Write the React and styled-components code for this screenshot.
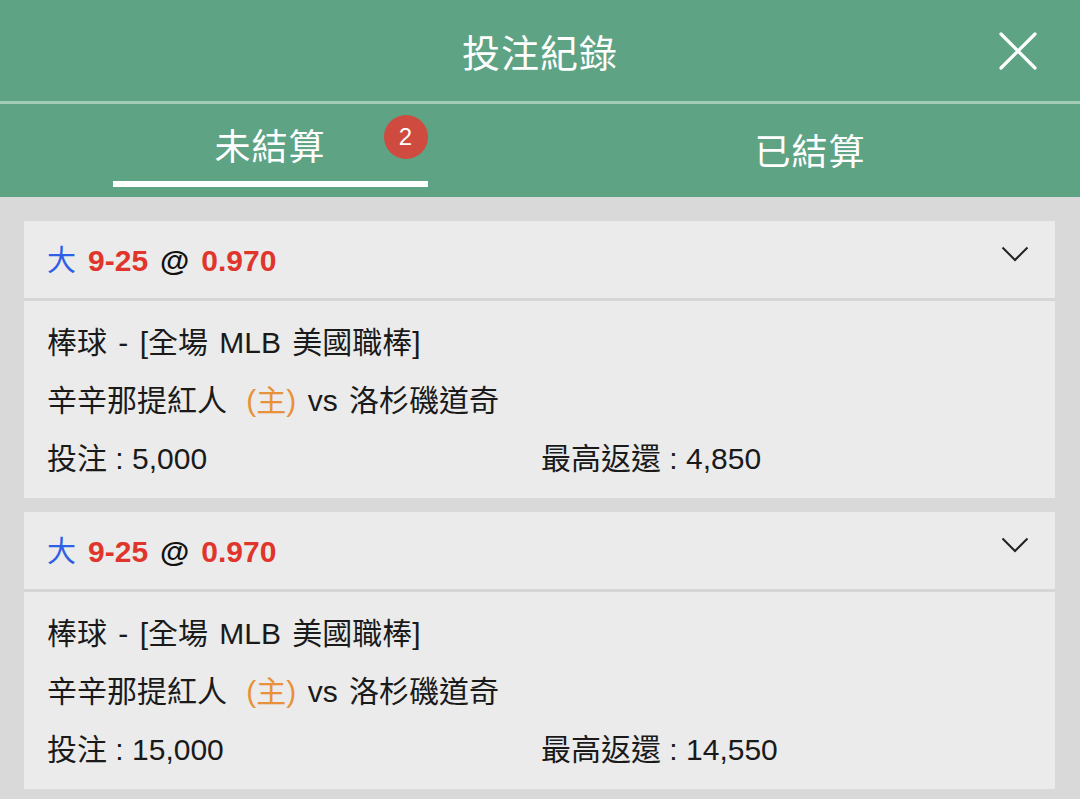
import styled, { createGlobalStyle } from "styled-components";

const GlobalStyle = createGlobalStyle`
  html, body {
    margin: 0;
    padding: 0;
    background: #d9d9d9;
  }
  body {
    font-family: "Liberation Sans", Arial, "Noto Sans CJK TC", sans-serif;
  }
`;

const Page = styled.div`
  width: 1080px;
  min-height: 799px;
  background: #d9d9d9;
`;

const Header = styled.header`
  background: #5ea384;
  color: #ffffff;
`;

const TitleBar = styled.div`
  height: 101px;
  display: flex;
  align-items: center;
  justify-content: center;
  position: relative;
  border-bottom: 3px solid #a3ccb8;
`;

const Title = styled.h1`
  margin: 0;
  font-size: 38px;
  font-weight: 400;
  letter-spacing: 1px;
`;

const CloseButton = styled.button`
  position: absolute;
  right: 42px;
  top: 31px;
  width: 40px;
  height: 40px;
  padding: 0;
  border: none;
  background: none;
  cursor: pointer;
`;

const Tabs = styled.nav`
  height: 93px;
  display: grid;
  grid-template-columns: 540px 540px;
`;

const Tab = styled.div`
  display: flex;
  justify-content: center;
`;

const TabInner = styled.div`
  position: relative;
  width: 315px;
  display: flex;
  justify-content: center;
  padding-top: ${({ $top }) => $top}px;
  box-sizing: border-box;
  border-bottom: 6px solid ${({ $active }) => ($active ? "#ffffff" : "transparent")};
  height: 83px;
`;

const TabLabel = styled.span`
  font-size: 36px;
  line-height: 44px;
  letter-spacing: 1px;
`;

const Badge = styled.span`
  position: absolute;
  right: 0;
  top: 11px;
  width: 44px;
  height: 44px;
  border-radius: 50%;
  background: #cf4a3f;
  color: #ffffff;
  font-size: 24px;
  display: flex;
  align-items: center;
  justify-content: center;
`;

const List = styled.main`
  padding: 24px 24px 0 24px;
  display: flex;
  flex-direction: column;
  gap: 14px;
`;

const Card = styled.section`
  background: #ebebeb;
  width: 1031px;
`;

const CardHead = styled.div`
  height: 77px;
  display: flex;
  align-items: center;
  justify-content: space-between;
  padding: 0 26px 0 23px;
  border-bottom: 3px solid #d6d6d6;
`;

const Pick = styled.div`
  font-size: 30px;
  font-weight: 700;
  display: flex;
  align-items: baseline;
  gap: 12px;
  margin-top: -4px;
`;

const Side = styled.span`
  color: #2f5fe6;
  font-weight: 400;
  font-size: 29px;
`;

const Red = styled.span`
  color: #e0352b;
`;

const At = styled.span`
  color: #111111;
`;

const Chevron = styled.svg`
  width: 28px;
  height: 16px;
  margin-top: -12px;
`;

const CardBody = styled.div`
  padding: 13px 23px 10px;
  display: flex;
  flex-direction: column;
  font-size: 30px;
  color: #1a1a1a;
`;

const Line = styled.div`
  height: 58px;
  line-height: 58px;
  word-spacing: 3px;
`;

const Home = styled.span`
  color: #e8913a;
  margin-left: 8px;
`;

const Amounts = styled.div`
  display: grid;
  grid-template-columns: 494px auto;
  height: 58px;
  line-height: 58px;
`;

const bets = [
  { stake: "5,000", max: "4,850" },
  { stake: "15,000", max: "14,550" },
];

export default function App() {
  return (
    <Page>
      <GlobalStyle />
      <Header>
        <TitleBar>
          <Title>投注紀錄</Title>
          <CloseButton aria-label="close">
            <svg width="40" height="40" viewBox="0 0 40 40">
              <path d="M3 3 L37 37 M37 3 L3 37" stroke="#fff" strokeWidth="3.2" strokeLinecap="round" />
            </svg>
          </CloseButton>
        </TitleBar>
        <Tabs>
          <Tab>
            <TabInner $active $top={22}>
              <TabLabel>未結算</TabLabel>
              <Badge>2</Badge>
            </TabInner>
          </Tab>
          <Tab>
            <TabInner $top={27}>
              <TabLabel>已結算</TabLabel>
            </TabInner>
          </Tab>
        </Tabs>
      </Header>
      <List>
        {bets.map((b, i) => (
          <Card key={i}>
            <CardHead>
              <Pick>
                <Side>大</Side>
                <Red>9-25</Red>
                <At>@</At>
                <Red>0.970</Red>
              </Pick>
              <Chevron viewBox="0 0 28 16">
                <path d="M1.5 1.5 L14 14 L26.5 1.5" fill="none" stroke="#222" strokeWidth="2" />
              </Chevron>
            </CardHead>
            <CardBody>
              <Line>棒球 - [全場 MLB 美國職棒]</Line>
              <Line>
                辛辛那提紅人 <Home>(主)</Home> vs 洛杉磯道奇
              </Line>
              <Amounts>
                <span>投注 : {b.stake}</span>
                <span>最高返還 : {b.max}</span>
              </Amounts>
            </CardBody>
          </Card>
        ))}
      </List>
    </Page>
  );
}
